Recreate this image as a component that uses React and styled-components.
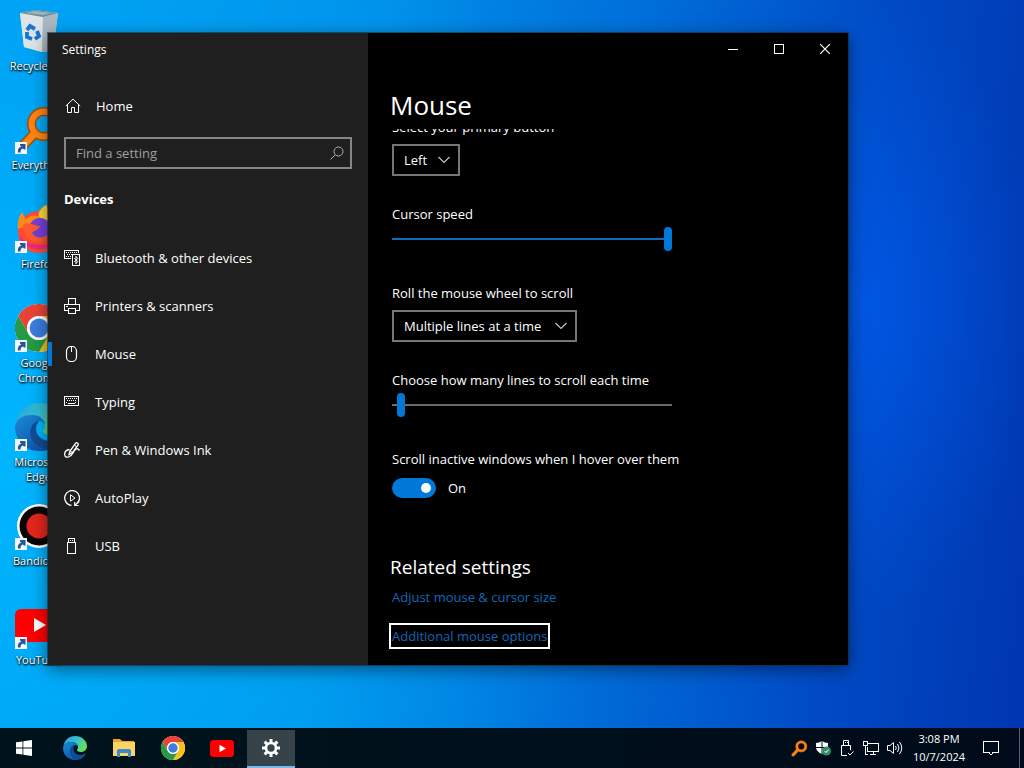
import React, { useState } from 'react';
import styled, { createGlobalStyle } from 'styled-components';

const GlobalStyle = createGlobalStyle`
  * {
    box-sizing: border-box;
  }
  body {
    margin: 0;
    font-family: 'Open Sans', 'Noto Sans', sans-serif;
    font-size: 13px;
    line-height: 20px;
    color: #fff;
    overflow: hidden;
  }
  button, input, select {
    font: inherit;
    color: inherit;
  }
  svg {
    display: block;
    flex-shrink: 0;
  }
`

/* ---------- Desktop ---------- */

const Screen = styled.div`
  display: flex;
  flex-direction: column;
  height: 100vh;
`
const Desktop = styled.main`
  position: relative;
  flex: 1;
  min-height: 0;
  overflow: hidden;
  background:
    radial-gradient(ellipse 16% 42% at 85% 42%, rgba(0, 98, 255, 0.5), rgba(0, 98, 255, 0) 100%),
    radial-gradient(ellipse 60% 100% at 0% 62%, rgba(0, 184, 255, 0.9), rgba(0, 184, 255, 0) 100%),
    linear-gradient(96deg, #0098f0 0%, #008ee8 35%, #0070da 58%, #004cc6 80%, #0036b0 100%);
`
const Shortcuts = styled.ul`
  display: flex;
  flex-direction: column;
  width: 77px;
  margin: 0;
  padding: 7px 0 0;
  list-style: none;
`
const Shortcut = styled.li`
  display: flex;
  flex-direction: column;
  align-items: center;
  gap: 1px;
  height: 99px;
  font-size: 11px;
  line-height: 15px;
  text-align: center;
  text-shadow: 0 1px 2px #000, 1px 1px 2px #000;
`
const ShortcutLabel = styled.span`
  width: 68px;
`

/* ---------- Settings window ---------- */

const Window = styled.section`
  position: absolute;
  top: 33px;
  right: 176px;
  bottom: 63px;
  left: 48px;
  display: flex;
  background: #000;
  box-shadow: 0 0 0 1px rgba(30, 40, 50, 0.6), 0 4px 16px rgba(0, 0, 0, 0.5);
`
const Sidebar = styled.aside`
  display: flex;
  flex-direction: column;
  width: 320px;
  flex-shrink: 0;
  background: #1f1f1f;
`
const WindowTitle = styled.h1`
  margin: 0;
  padding: 0 14px;
  font-size: 12px;
  font-weight: 400;
  line-height: 34px;
`
const HomeLink = styled.a`
  display: flex;
  align-items: center;
  gap: 15px;
  height: 48px;
  margin-top: 15px;
  padding: 0 17px;
  color: #fff;
  text-decoration: none;
`
const SearchBox = styled.label`
  display: flex;
  align-items: center;
  height: 32px;
  margin: 7px 16px 0;
  padding: 0 6px 0 10px;
  border: 2px solid #858585;
`
const SearchInput = styled.input`
  flex: 1;
  min-width: 0;
  padding: 0;
  border: 0;
  outline: 0;
  background: transparent;
  &::placeholder {
    color: #a0a0a0;
    opacity: 1;
  }
`
const Category = styled.h2`
  margin: 20px 16px 25px;
  font-size: 13px;
  font-weight: 700;
  line-height: 20px;
`
const NavList = styled.ul`
  margin: 0;
  padding: 0;
  list-style: none;
`
const NavLink = styled.a`
  display: flex;
  align-items: center;
  height: 48px;
  color: #fff;
  text-decoration: none;
  &::before {
    content: '';
    width: 4px;
    height: 24px;
    margin-right: 12px;
    background: ${({ $active }) => ($active ? '#0078d7' : 'transparent')};
  }
  svg {
    margin-right: 15px;
  }
`
const Page = styled.div`
  display: flex;
  flex-direction: column;
  flex: 1;
  min-width: 0;
`
const WindowButtons = styled.div`
  display: flex;
  justify-content: flex-end;
`
const WindowButton = styled.button`
  display: grid;
  place-items: center;
  width: 46px;
  height: 32px;
  padding: 0;
  border: 0;
  background: transparent;
`
const PageTitle = styled.h2`
  margin: 26px 22px 0;
  font-size: 26px;
  font-weight: 400;
  line-height: 28px;
`
/* The list is scrolled to its end, so it hangs from the bottom edge */
const Scroller = styled.div`
  display: flex;
  flex-direction: column;
  justify-content: flex-end;
  flex: 1;
  min-height: 0;
  margin-top: 10px;
  padding: 0 24px 19px;
  overflow: hidden;
`
const Field = styled.div`
  display: flex;
  flex-direction: column;
  align-items: flex-start;
  flex-shrink: 0;
  gap: ${({ $tight }) => ($tight ? '3px' : '7px')};
  margin-bottom: ${({ $tight }) => ($tight ? '32px' : '28px')};
`
const SelectBox = styled.div`
  display: grid;
  align-items: center;
  width: ${({ $width }) => $width}px;
  height: 32px;
  border: 2px solid #767676;
  > * {
    grid-area: 1 / 1;
  }
  svg {
    justify-self: end;
    margin-right: 8px;
    pointer-events: none;
  }
`
const Select = styled.select`
  width: 100%;
  height: 28px;
  padding: 0 10px;
  border: 0;
  outline: 0;
  appearance: none;
  background: #000;
`
const Range = styled.input`
  width: 280px;
  max-width: 100%;
  height: 24px;
  margin: 0;
  appearance: none;
  background: linear-gradient(${({ $filled }) => ($filled ? '#0f6cbd, #0f6cbd' : '#6b6b6b, #6b6b6b')}) center / 100% 2px no-repeat;
  &::-webkit-slider-thumb {
    appearance: none;
    width: 8px;
    height: 24px;
    border-radius: 4px;
    background: #0078d7;
  }
`
const ToggleRow = styled.div`
  display: flex;
  align-items: center;
  gap: 12px;
  padding-top: 2px;
`
const Toggle = styled.input`
  display: flex;
  align-items: center;
  justify-content: flex-end;
  width: 44px;
  height: 20px;
  margin: 0;
  padding: 0 5px;
  border-radius: 10px;
  appearance: none;
  background: #0078d7;
  &::before {
    content: '';
    width: 10px;
    height: 10px;
    border-radius: 50%;
    background: #fff;
  }
  &:not(:checked) {
    justify-content: flex-start;
    background: #333;
  }
`
const Related = styled.div`
  display: flex;
  flex-direction: column;
  align-items: flex-start;
  flex-shrink: 0;
  gap: 19px;
  margin-top: 27px;
`
const RelatedTitle = styled.h3`
  margin: 0 0 -13px -2px;
  font-size: 19px;
  font-weight: 400;
  line-height: 28px;
`
const RelatedLink = styled.a`
  color: #1068b8;
  text-decoration: none;
  outline: ${({ $focused }) => ($focused ? '2px solid #fff' : 'none')};
  outline-offset: 1px;
`

/* ---------- Taskbar ---------- */

const Taskbar = styled.footer`
  display: flex;
  height: 40px;
  flex-shrink: 0;
  background: linear-gradient(90deg, #00131c, #00101c 50%, #000a1a);
`
const Apps = styled.nav`
  display: flex;
  gap: 1px;
  flex: 1;
`
const AppButton = styled.button`
  display: grid;
  place-items: center;
  width: 48px;
  height: 40px;
  padding: 0;
  border: 0;
  border-top: 2px solid transparent;
  border-bottom: 2px solid ${({ $open }) => ($open ? '#76b9ed' : 'transparent')};
  background: ${({ $open }) => ($open ? '#364349' : 'transparent')};
  background-clip: padding-box, border-box;
  &:first-child {
    margin-right: 2px;
  }
`
const Tray = styled.div`
  display: flex;
  align-items: center;
`
const TrayButton = styled.button`
  display: grid;
  place-items: center;
  width: 24px;
  height: 40px;
  padding: 0;
  border: 0;
  background: transparent;
`
const Clock = styled.time`
  width: 64px;
  font-size: 11px;
  line-height: 18px;
  text-align: center;
`
const NoticeButton = styled(TrayButton)`
  width: 40px;
`
const ShowDesktop = styled.button`
  width: 5px;
  height: 40px;
  margin-left: 8px;
  padding: 0;
  border: 0;
  border-left: 1px solid #59636c;
  background: transparent;
`

/* ---------- Brand icons ---------- */

const ChromeLogo = ({ size }) => (
  <svg width={size} height={size} viewBox="0 0 48 48">
    <circle cx="24" cy="24" r="24" fill="#fff" />
    <path d="M3.2 12A24 24 0 0 1 44.8 12H24A12 12 0 0 0 13.6 30Z" fill="#ea4335" />
    <path d="M44.8 12A24 24 0 0 1 24 48L34.4 30A12 12 0 0 0 24 12Z" fill="#fbc116" />
    <path d="M24 48A24 24 0 0 1 3.2 12L13.6 30A12 12 0 0 0 34.4 30Z" fill="#269a45" />
    <circle cx="24" cy="24" r="12" fill="#fff" />
    <circle cx="24" cy="24" r="9.4" fill="#3b7de0" />
  </svg>
)

const EdgeLogo = ({ size, id }) => (
  <svg width={size} height={size} viewBox="0 0 48 48">
    <defs>
      <linearGradient id={`${id}-top`} x1="0" y1="0" x2="1" y2="0.4">
        <stop offset="0" stopColor="#2a9fe0" />
        <stop offset="0.6" stopColor="#35c3d0" />
        <stop offset="1" stopColor="#66e05c" />
      </linearGradient>
      <linearGradient id={`${id}-low`} x1="0" y1="0" x2="0.6" y2="1">
        <stop offset="0" stopColor="#1b8ad8" />
        <stop offset="1" stopColor="#0f56a8" />
      </linearGradient>
    </defs>
    <path d="M1 20C3 8 12 0 24 0c14 0 24 10 24 20 0 7-5 12-12 12-5 0-8-2-8-4 0-1 2-2 2-6 0-5-5-10-13-10C9 12 3 16 1 20Z" fill={`url(#${id}-top)`} />
    <path d="M0 24C1 16 8 12 17 12c8 0 13 5 13 10 0-2-3-4-6-4-5 0-9 5-9 12 0 9 8 17 18 17-3 1-6 1-9 1C10 48 0 37 0 24Z" fill={`url(#${id}-low)`} />
    <path d="M24 18c-5 0-9 5-9 12 0 9 8 17 18 17 5-2 9-5 12-10 1-2 0-2-1-2-3 2-6 3-9 3-8 0-14-6-14-12 0-4 2-6 3-8Z" fill="#124c96" />
  </svg>
)

const YouTubeLogo = ({ width, height }) => (
  <svg width={width} height={height} viewBox="0 0 48 34">
    <rect width="48" height="34" rx="7" fill="#f00" />
    <path d="M19 9.500V24.500L32 17Z" fill="#fff" />
  </svg>
)

const Magnifier = ({ size }) => (
  <svg width={size} height={size} viewBox="0 0 48 48" fill="none" strokeLinecap="round">
    <circle cx="29" cy="18" r="12.500" stroke="#a34c05" strokeWidth="9" />
    <path d="M19 28 6 42" stroke="#a34c05" strokeWidth="10" />
    <circle cx="29" cy="18" r="12.500" stroke="#ff8412" strokeWidth="6" />
    <path d="M19 28 6 42" stroke="#ff8412" strokeWidth="7" />
  </svg>
)

/* Little arrow badge in the corner of every shortcut icon */
const Arrow = () => (
  <g transform="translate(0 36)">
    <rect width="12" height="12" fill="#f4f6f8" />
    <path d="M3 10.500C2.500 7 4 5 6.500 5L5 3.500V2h5.500v5.500H9L8 6.500C6 7 5.500 8.500 5.500 10.500Z" fill="#24559c" />
  </g>
)

const ShortcutIcon = ({ children, arrow = true }) => (
  <svg width="48" height="50" viewBox="0 0 48 50">
    {children}
    {arrow && <Arrow />}
  </svg>
)

const shortcuts = [
  {
    name: 'Recycle Bin',
    icon: (
      <ShortcutIcon arrow={false}>
        <path d="M5 6 20 3 43 6 38 44 27 45 9 40Z" fill="#cfd8dd" />
        <path d="M5 6 28 10 27 45 9 40Z" fill="#dde3e6" />
        <path d="M28 10 43 6 38 44 27 45Z" fill="#a9b8c2" />
        <path d="M5 6 20 3 43 6 28 10Z" fill="#6d8b99" />
        <path d="M10 6 20 4 37 6 28 8Z" fill="#9db4be" />
        <g fill="none" stroke="#1377d3" strokeWidth="3.800">
          <path d="M12 23 15 19 20 22" />
          <path d="M22 24 24 29 20 32" />
          <path d="M17 32 12 30 12 25" />
        </g>
      </ShortcutIcon>
    ),
  },
  {
    name: 'Everything',
    icon: <ShortcutIcon><Magnifier size={48} /></ShortcutIcon>,
  },
  {
    name: 'Firefox',
    icon: (
      <ShortcutIcon>
        <circle cx="24" cy="27" r="21" fill="#ff4a36" />
        <path d="M3 24C2 14 5 9 8 7c0 3 1 5 3 7 5-4 9-4 12-3 0-5 3-9 8-11 0 8 13 10 14 26-10-6-30-8-42-2Z" fill="#ff8a1c" />
        <path d="M24 11c0-5 3-9 8-11 0 8 13 10 13 26L30 22Z" fill="#ffd83a" />
        <circle cx="25" cy="24" r="11" fill="#7540d8" />
        <path d="M8 20c7-4 11 1 17 1-1 4-6 4-8 7 3 5 10 6 16 2-4 12-25 9-25-10Z" fill="#ff5b2d" />
        <path d="M4 30c4 16 26 20 38 6-6 4-28 8-38-6Z" fill="#f02a72" />
      </ShortcutIcon>
    ),
  },
  {
    name: 'Google Chrome',
    icon: <ShortcutIcon><ChromeLogo size={48} /></ShortcutIcon>,
  },
  {
    name: 'Microsoft Edge',
    icon: <ShortcutIcon><EdgeLogo size={48} id="edge-desktop" /></ShortcutIcon>,
  },
  {
    name: 'Bandicam',
    icon: (
      <ShortcutIcon>
        <circle cx="24" cy="24" r="22" fill="#fff" />
        <circle cx="24" cy="24" r="19.500" fill="#0a0505" />
        <circle cx="24" cy="24" r="12.500" fill="#e4251d" />
      </ShortcutIcon>
    ),
  },
  {
    name: 'YouTube',
    icon: (
      <ShortcutIcon>
        <rect y="8" width="48" height="33" rx="6" fill="#f00" />
        <path d="M19 17v14l12-7Z" fill="#fff" />
      </ShortcutIcon>
    ),
  },
]

/* ---------- Line icons of the settings window ---------- */

const LineIcon = ({ children, size = 16, crisp }) => (
  <svg
    width={size}
    height={size}
    viewBox={`0 0 ${size} ${size}`}
    fill="none"
    stroke="#fff"
    shapeRendering={crisp ? 'crispEdges' : 'auto'}
  >
    {children}
  </svg>
)

const Chevron = () => (
  <svg width="12" height="8" viewBox="0 0 12 8" fill="none" stroke="#c4c4c4">
    <path d="M0.500 1 6 6.500 11.500 1" strokeWidth="1.200" />
  </svg>
)

const navItems = [
  {
    name: 'Bluetooth & other devices',
    icon: (
      <LineIcon crisp>
        <path d="M7 8.500H0.500V0.500H14.500V3" />
        <path d="M2 2.500H13M3 4.500H8M2 6.500H7" strokeDasharray="1 1" />
        <rect x="8.500" y="4.500" width="7" height="11" />
        <path d="M12 6v8M10.300 8l3.400 3.500-1.700 2M10.300 12l3.400-3.500-1.700-2" shapeRendering="auto" />
      </LineIcon>
    ),
  },
  {
    name: 'Printers & scanners',
    icon: (
      <LineIcon crisp>
        <path d="M4.500 6V0.500H11.500V6" />
        <path d="M4 12.500H0.500V6.500H15.500V12.500H12" />
        <rect x="4.500" y="10.500" width="7" height="5" />
        <path d="M2 8.500H4" />
      </LineIcon>
    ),
  },
  {
    name: 'Mouse',
    active: true,
    icon: (
      <LineIcon>
        <rect x="2.500" y="0.500" width="10" height="15" rx="4.500" strokeWidth="1.200" />
        <path d="M7.500 0.500V6" />
      </LineIcon>
    ),
  },
  {
    name: 'Typing',
    icon: (
      <LineIcon crisp>
        <rect x="0.500" y="2.500" width="14" height="9" />
        <path d="M2 4.500H13M3 6.500H13M2 8.500H4M11 8.500H13" strokeDasharray="1 1" />
        <path d="M4 9.500H11" />
      </LineIcon>
    ),
  },
  {
    name: 'Pen & Windows Ink',
    icon: (
      <LineIcon>
        <path d="M5 12.500 6 9 11.500 1.500C12.500 0 15 1.200 14 3.200L8.500 10.500Z" strokeWidth="1.300" />
        <path d="M10.500 3 13 5M6 9l2.500 1.500" />
        <path d="M5.500 7.500C2 8 0.500 10.500 0.700 12.700S2.500 15.600 4.500 15C8 14 8.500 11 10.500 8.500S13.500 6 15.500 8.500" strokeWidth="1.300" />
      </LineIcon>
    ),
  },
  {
    name: 'AutoPlay',
    icon: (
      <LineIcon>
        <path d="M7.500 15.300A7.400 7.400 0 1 1 13.500 13" strokeWidth="1.300" />
        <path d="M6.500 4.800V11.200L11 8Z" />
        <path d="M15 11.500 11 15.300M10.700 12V15.500H14.500" strokeWidth="1.200" />
      </LineIcon>
    ),
  },
  {
    name: 'USB',
    icon: (
      <LineIcon crisp>
        <path d="M4.500 4V0.500H10.500V4" />
        <rect x="3.500" y="4.500" width="8" height="11" />
        <path d="M6 2.500H7M8 2.500H9" />
      </LineIcon>
    ),
  },
]

const SettingsWindow = () => {

  const [speed, setSpeed] = useState(20);
  const [lines, setLines] = useState(3);
  const [inactive, setInactive] = useState(true);

  return (
    <Window aria-label="Settings">
      <Sidebar>
        <WindowTitle>Settings</WindowTitle>
        <HomeLink href="#home">
          <LineIcon>
            <path d="M0.800 8 8 1.200 15.200 8M2.500 6.500V14.500H6.500V9.500H9.500V14.500H13.500V6.500" />
          </LineIcon>
          Home
        </HomeLink>
        <SearchBox>
          <SearchInput type="text" placeholder="Find a setting" aria-label="Find a setting" />
          <svg width="14" height="14" viewBox="0 0 14 14" fill="none" stroke="#b0b0b0">
            <circle cx="8.500" cy="5.500" r="4.500" />
            <path d="M5.200 8.800 0.500 13.500" />
          </svg>
        </SearchBox>
        <Category>Devices</Category>
        <NavList>
          {navItems.map(({ name, icon, active }) => (
            <li key={name}>
              <NavLink href="#" $active={active}>{icon}{name}</NavLink>
            </li>
          ))}
        </NavList>
      </Sidebar>
      <Page>
        <WindowButtons>
          <WindowButton aria-label="Minimize">
            <LineIcon size={10} crisp><path d="M0 5.500H10" /></LineIcon>
          </WindowButton>
          <WindowButton aria-label="Maximize">
            <LineIcon size={10} crisp><rect x="0.500" y="0.500" width="9" height="9" /></LineIcon>
          </WindowButton>
          <WindowButton aria-label="Close">
            <LineIcon size={10}><path d="M0 0 10 10M10 0 0 10" strokeWidth="1.200" /></LineIcon>
          </WindowButton>
        </WindowButtons>
        <PageTitle>Mouse</PageTitle>
        <Scroller>
          <Field>
            <label htmlFor="primary">Select your primary button</label>
            <SelectBox $width={68}>
              <Select id="primary" defaultValue="Left">
                <option>Left</option>
                <option>Right</option>
              </Select>
              <Chevron />
            </SelectBox>
          </Field>
          <Field $tight>
            <label htmlFor="speed">Cursor speed</label>
            <Range
              id="speed"
              type="range"
              min="1"
              max="20"
              value={speed}
              onChange={(e) => setSpeed(e.target.value)}
              $filled
            />
          </Field>
          <Field>
            <label htmlFor="wheel">Roll the mouse wheel to scroll</label>
            <SelectBox $width={185}>
              <Select id="wheel" defaultValue="Multiple lines at a time">
                <option>Multiple lines at a time</option>
                <option>One screen at a time</option>
              </Select>
              <Chevron />
            </SelectBox>
          </Field>
          <Field $tight>
            <label htmlFor="lines">Choose how many lines to scroll each time</label>
            <Range
              id="lines"
              type="range"
              min="1"
              max="100"
              value={lines}
              onChange={(e) => setLines(e.target.value)}
            />
          </Field>
          <Field>
            <label htmlFor="inactive">Scroll inactive windows when I hover over them</label>
            <ToggleRow>
              <Toggle
                id="inactive"
                type="checkbox"
                checked={inactive}
                onChange={() => setInactive(!inactive)}
              />
              <span>{inactive ? 'On' : 'Off'}</span>
            </ToggleRow>
          </Field>
          <Related>
            <RelatedTitle>Related settings</RelatedTitle>
            <RelatedLink href="#cursor">Adjust mouse &amp; cursor size</RelatedLink>
            <RelatedLink href="#options" $focused>Additional mouse options</RelatedLink>
          </Related>
        </Scroller>
      </Page>
    </Window>
  )
}

const gearTeeth = [0, 45, 90, 135, 180, 225, 270, 315];

const App = () => (
  <Screen>
    <GlobalStyle />
    <Desktop>
      <Shortcuts>
        {shortcuts.map(({ name, icon }) => (
          <Shortcut key={name}>
            {icon}
            <ShortcutLabel>{name}</ShortcutLabel>
          </Shortcut>
        ))}
      </Shortcuts>
      <SettingsWindow />
    </Desktop>
    <Taskbar>
      <Apps>
        <AppButton aria-label="Start">
          <svg width="16" height="16" viewBox="0 0 16 16" fill="#fff">
            <path d="M0 2.300 6.500 1.400V7.600H0ZM7.300 1.300 16 0V7.600H7.300ZM0 8.400H6.500V14.600L0 13.700ZM7.300 8.400H16V16L7.300 14.700Z" />
          </svg>
        </AppButton>
        <AppButton aria-label="Microsoft Edge">
          <EdgeLogo size={24} id="edge-taskbar" />
        </AppButton>
        <AppButton aria-label="File Explorer">
          <svg width="22" height="20" viewBox="0 0 22 20">
            <path d="M0 1H7L9 3H21V18H0Z" fill="#e8a921" />
            <path d="M0 4H22V18H0Z" fill="#fcd462" />
            <path d="M4 19V13Q4 11 6 11H16Q18 11 18 13V19H15V15H7V19Z" fill="#3b8ad0" />
          </svg>
        </AppButton>
        <AppButton aria-label="Google Chrome">
          <ChromeLogo size={24} />
        </AppButton>
        <AppButton aria-label="YouTube">
          <YouTubeLogo width={24} height={17} />
        </AppButton>
        <AppButton aria-label="Settings" $open>
          <svg width="18" height="18" viewBox="0 0 18 18" fill="none" stroke="#fff">
            <circle cx="9" cy="9" r="5" strokeWidth="2.600" />
            {gearTeeth.map((angle) => (
              <path key={angle} d="M9 0V3.500" strokeWidth="3" transform={`rotate(${angle} 9 9)`} />
            ))}
          </svg>
        </AppButton>
      </Apps>
      <Tray>
        <TrayButton aria-label="Everything"><Magnifier size={17} /></TrayButton>
        <TrayButton aria-label="Windows Security">
          <LineIcon>
            <path d="M7 1Q4 3 1 3V8Q2 12 7 14Q12 12 13 8V3Q10 3 7 1Z" fill="#fff" stroke="none" />
            <path d="M7 1V14M1 7.500H13" stroke="#00101c" />
            <circle cx="11.500" cy="11" r="4.500" fill="#2f9163" stroke="none" />
            <path d="M9.500 11 11 12.500 13.500 9.500" />
          </LineIcon>
        </TrayButton>
        <TrayButton aria-label="Safely remove hardware">
          <LineIcon>
            <path d="M4.500 5V0.500H9.500V5M8 15.500H2.500V5.500H11.500V10M6 2.500H7M8 2.500H9" />
            <path d="M9 13 11 15 14.500 11.500" />
          </LineIcon>
        </TrayButton>
        <TrayButton aria-label="Network">
          <LineIcon crisp>
            <path d="M5 3.500H15.500V11.500H4.500V7M10 12V14M7 14.500H13" />
            <path d="M0.500 1.500H4.500V5.500H0.500ZM2.500 6V14.500H5" />
          </LineIcon>
        </TrayButton>
        <TrayButton aria-label="Volume">
          <LineIcon>
            <path d="M0.500 5.500H3L6.500 2.500V13.500L3 10.500H0.500ZM8.500 6Q10 8 8.500 10M10.500 4Q13.500 8 10.500 12M12.500 2Q17 8 12.500 14" />
          </LineIcon>
        </TrayButton>
        <Clock>3:08 PM<br />10/7/2024</Clock>
        <NoticeButton aria-label="Notifications">
          <LineIcon crisp>
            <path d="M0.500 1.500H15.500V12.500H10L8 15 6 12.500H0.500Z" />
          </LineIcon>
        </NoticeButton>
        <ShowDesktop aria-label="Show desktop" />
      </Tray>
    </Taskbar>
  </Screen>
)

export default App
